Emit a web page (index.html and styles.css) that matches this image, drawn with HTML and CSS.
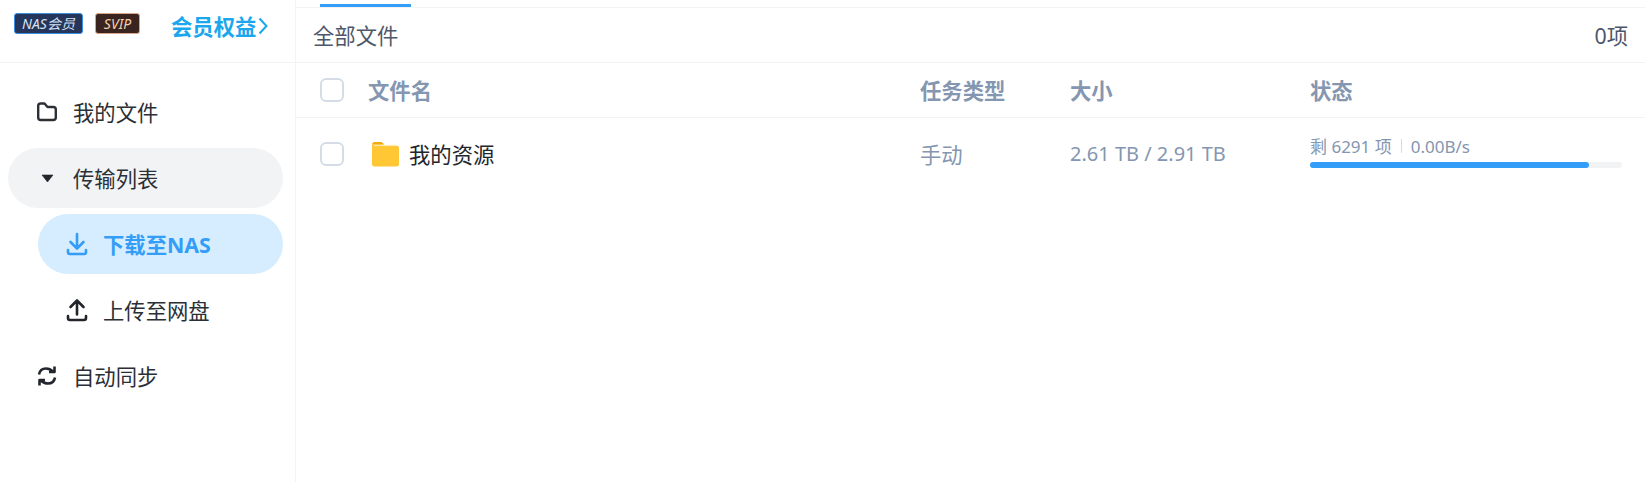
FILE: index.html
```html
<!DOCTYPE html>
<html>
<head>
<meta charset="UTF-8">
<title>传输列表</title>
<link rel="stylesheet" href="styles.css">
</head>
<body>
<div class="app">
    <div class="sidebar">
        <div class="vip-bar">
            <span class="badge badge-nas">NAS会员</span>
            <span class="badge badge-svip">SVIP</span>
            <a class="vip-link">会员权益<svg class="chevron" width="10" height="18" viewBox="0 0 10 18"><path d="M1.500 1.500 8.500 9l-7 7.500" fill="none" stroke="#1aa7ee" stroke-width="2"/></svg></a>
        </div>
        <div class="nav">
            <div class="nav-item">
                <svg class="nav-icon" width="22" height="22" viewBox="0 0 22 22"><path d="M2.200 5a2.500 2.500 0 0 1 2.500-2.500h3.800l3 3.500h5.800a2.500 2.500 0 0 1 2.500 2.500v8a2.500 2.500 0 0 1-2.500 2.500h-12.600a2.500 2.500 0 0 1-2.500-2.500z" fill="none" stroke="#2b2f36" stroke-width="2.400" stroke-linejoin="round"/></svg>
                <span>我的文件</span>
            </div>
            <div class="nav-item nav-open">
                <svg class="nav-icon" width="22" height="22" viewBox="0 0 22 22"><path d="M6 8h11l-5.500 7z" fill="#22262c" stroke="#22262c" stroke-width=".6" stroke-linejoin="round"/></svg>
                <span>传输列表</span>
            </div>
            <div class="nav-item nav-sub nav-active">
                <svg class="nav-icon" width="22" height="24" viewBox="0 0 22 24"><path d="M11 2v14M4.500 10l6.500 6.500 6.500-6.500M2 18v2a2 2 0 0 0 2 2h14a2 2 0 0 0 2-2v-2" fill="none" stroke="#349df7" stroke-width="2.600" stroke-linecap="round" stroke-linejoin="round"/></svg>
                <span>下载至NAS</span>
            </div>
            <div class="nav-item nav-sub">
                <svg class="nav-icon" width="22" height="24" viewBox="0 0 22 24"><path d="M11 16.500V2.500M4.500 9 11 2.500 17.500 9M2 18v2a2 2 0 0 0 2 2h14a2 2 0 0 0 2-2v-2" fill="none" stroke="#22262c" stroke-width="2.600" stroke-linecap="round" stroke-linejoin="round"/></svg>
                <span>上传至网盘</span>
            </div>
            <div class="nav-item">
                <svg class="nav-icon" width="22" height="22" viewBox="0 0 22 22"><path d="M3 9.500C3.700 5.500 6.800 3.500 10 3.500c2.500 0 4.800.8 7 3M18.500 1.500v5.500h-5.500M19 12.500c-.7 4-3.800 6-7 6-2.500 0-4.800-.8-7-3M3.500 20.500V15h5.500" fill="none" stroke="#22262c" stroke-width="2.600" stroke-linejoin="round"/></svg>
                <span>自动同步</span>
            </div>
        </div>
    </div>
    <div class="main">
        <div class="tabs"><div class="tab-line"></div></div>
        <div class="toolbar">
            <span>全部文件</span>
            <span>0项</span>
        </div>
        <div class="row row-head">
            <span class="check"></span>
            <span class="cell">文件名</span>
            <span class="cell">任务类型</span>
            <span class="cell">大小</span>
            <span class="cell">状态</span>
        </div>
        <div class="row row-task">
            <span class="check"></span>
            <div class="file-name">
                <svg width="29" height="26" viewBox="0 0 29 26"><path d="M1 4a3 3 0 0 1 3-3h6.500l3 2.500h-12.500z" fill="#f6a90f"/><path d="M1 4a2 2 0 0 1 2-1h8l2 1.500h12a3 3 0 0 1 3 3V23a2.500 2.500 0 0 1-2.500 2.500h-22A2.500 2.500 0 0 1 1 23z" fill="#ffc733"/><path d="M3 4.500h23" stroke="#ffe9a8" stroke-width="1.200"/></svg>
                <span class="cell">我的资源</span>
            </div>
            <span class="cell task-type">手动</span>
            <span class="cell">2.61 TB / 2.91 TB</span>
            <div class="status">
                <div class="status-text">剩 6291 项<i class="sep"></i>0.00B/s</div>
                <div class="progress"><div class="progress-fill" style="width:89.500%"></div></div>
            </div>
        </div>
    </div>
</div>
</body>
</html>
```

FILE: styles.css
```css
html, body {
    margin: 0;
    height: 100%;
    background: #fff;
    font-family: "Noto Sans", "Noto Sans CJK SC", sans-serif;
    overflow: hidden;
}
.app {
    display: flex;
    height: 482px;
    overflow: hidden;
}

.sidebar {
    width: 295px;
    flex: none;
    border-right: 1px solid #f2f3f5;
}
.vip-bar {
    display: flex;
    align-items: center;
    height: 63px;
    padding: 0 0 15px 14px;
    box-sizing: border-box;
    border-bottom: 1px solid #f2f3f5;
}
.badge {
    display: block;
    height: 21px;
    line-height: 19px;
    box-sizing: border-box;
    border-radius: 3px;
    font-size: 14px;
    font-style: italic;
    text-align: center;
}
.badge-nas {
    width: 69px;
    background: #26355a;
    border: 1px solid #3a8fe0;
    color: #d5e2f5;
}
.badge-svip {
    width: 45px;
    margin-left: 12px;
    background: #3a2420;
    border: 1px solid #d9a58a;
    color: #f3cfae;
}
.vip-link {
    display: flex;
    align-items: center;
    margin: 4px 0 0 31px;
    color: #1aa7ee;
    font-size: 21.330px;
    font-weight: 700;
}
.chevron {
    margin-left: 2px;
}

.nav {
    padding: 19px 12px 0 8px;
    display: flex;
    flex-direction: column;
    gap: 6px;
}
.nav-item {
    display: flex;
    align-items: center;
    height: 60px;
    padding-left: 28px;
    border-radius: 30px;
    color: #2b2f36;
    font-size: 21.330px;
}
.nav-item span {
    margin-bottom: 2px;
}
.nav-icon {
    flex: none;
    margin-right: 15px;
}
.nav-open {
    background: #f2f3f5;
}
.nav-sub {
    margin-left: 30px;
}
.nav-active {
    background: #d5edff;
    color: #349df7;
    font-weight: 700;
}

.main {
    flex: 1;
    min-width: 0;
}
.tabs {
    display: flow-root;
    height: 7px;
    border-bottom: 1px solid #f2f3f5;
    padding-left: 24px;
}
.tab-line {
    width: 91px;
    height: 3px;
    margin-top: 4px;
    background: #349df7;
}
.toolbar {
    display: flex;
    justify-content: space-between;
    align-items: center;
    height: 55px;
    box-sizing: border-box;
    padding: 0 17px;
    border-bottom: 1px solid #f2f3f5;
    color: #4e5769;
    font-size: 21.330px;
}
.toolbar span {
    margin-bottom: 2px;
}

.row {
    display: grid;
    grid-template-columns: 48px 552px 150px 240px 312px;
    align-items: center;
    padding-left: 24px;
    color: #8496b0;
    font-size: 20px;
}
.cell {
    margin-bottom: 2px;
}
.row-head {
    height: 55px;
    box-sizing: border-box;
    border-bottom: 1px solid #f2f3f5;
    font-size: 21.330px;
    font-weight: 700;
}
.row-task {
    height: 72px;
}
.task-type {
    font-size: 21.330px;
}
.check {
    display: block;
    width: 24px;
    height: 24px;
    box-sizing: border-box;
    border: 2px solid #d4dce6;
    border-radius: 6px;
    background: #fff;
}
.file-name {
    display: flex;
    align-items: center;
    color: #22262c;
    font-size: 21.330px;
    padding-left: 3px;
}
.file-name svg {
    margin-right: 9px;
}
.status {
    padding-bottom: 5px;
}
.status-text {
    font-size: 17px;
    line-height: 24px;
}
.sep {
    display: inline-block;
    width: 1px;
    height: 14px;
    margin: 0 9px;
    background: #d4dce6;
}
.progress {
    height: 6px;
    margin-top: 3px;
    border-radius: 3px;
    background: #f2f3f5;
}
.progress-fill {
    height: 100%;
    border-radius: 3px;
    background: #349df7;
}
```
